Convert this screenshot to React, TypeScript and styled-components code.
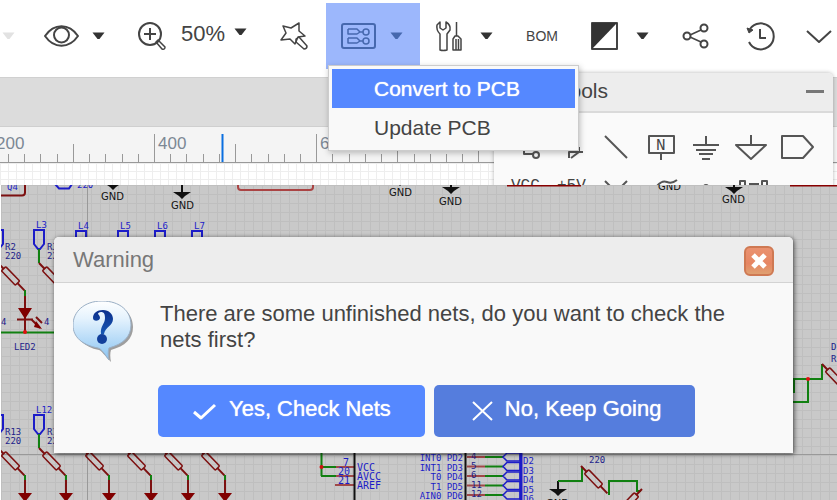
import React from "react";
import styled, { createGlobalStyle } from "styled-components";

const GlobalStyle = createGlobalStyle`
  * { box-sizing: border-box; }
  body { margin: 0; background: #fff; overflow: hidden; }
  body, button { font-family: "Liberation Sans", Arial, sans-serif; }
  button { border: 0; padding: 0; background: none; color: inherit; cursor: pointer; }
  svg { display: block; flex: none; }
`;

const Page = styled.div`
  min-height: 100vh;
  display: flex;
  flex-direction: column;
`;

const Editor = styled.section`
  position: relative;
  height: 185px;
  overflow: hidden;
`;

const Toolbar = styled.header`
  display: flex;
  align-items: center;
  gap: 33px;
  height: 77px;
  padding-bottom: 5px;
  color: #333;
`;

const ToolButton = styled.button<{ $gap?: number; $active?: boolean; $size?: number }>`
  flex: none;
  display: flex;
  align-items: center;
  gap: ${(p) => p.$gap ?? 13}px;
  font-size: ${(p) => p.$size ?? 22}px;
  color: ${(p) => (p.$active ? "#4668ae" : "#444")};
  ${(p) => p.$active && "height: 66px; padding: 0 17px 0 15px; margin: 0 -17px 0 -15px; background: #9cb7fc;"}
`;

const ZoomValue = styled.span`
  padding: 0 0 4px 6px;
`;

const CaretShape = styled.svg<{ $raised?: boolean }>`
  fill: ${(p) => p.color ?? "#333"};
  margin-bottom: ${(p) => (p.$raised ? 8 : 0)}px;
`;

const Glyph = styled.svg<{ $weight?: number }>`
  overflow: visible;
  fill: none;
  stroke: currentColor;
  stroke-width: ${(p) => p.$weight ?? 2};
  stroke-linejoin: round;
`;

const Faint = styled.div`
  width: 11px;
  display: flex;
  padding-left: 2px;
`;

const TabStrip = styled.div`
  height: 50px;
  background: #dcdcdc;
  border-top: 1px solid #d0d0d0;
  border-bottom: 1px solid #cfcfcf;
`;

const Ruler = styled.div`
  height: 36px;
  background: #f4f4f4;
  border-bottom: 1px solid #999;
  overflow: hidden;
  text { font: 17px "Liberation Sans", Arial, sans-serif; fill: #7c8895; }
`;

const Sheet = styled.div`
  height: 22px;
  background-color: #fff;
  background-image: linear-gradient(#eee 1px, transparent 1px), linear-gradient(90deg, #eee 1px, transparent 1px);
  background-size: 8px 8px;
`;

const ToolPanel = styled.aside`
  position: absolute;
  top: 73px;
  left: 494px;
  right: 4px;
  height: 130px;
  background: #fafafa;
  border-radius: 5px;
  box-shadow: 0 0 4px rgba(0, 0, 0, 0.3);
`;

const PanelHeader = styled.div`
  display: flex;
  align-items: center;
  justify-content: space-between;
  height: 40px;
  padding: 0 9px 2px 65px;
  background: #ededed;
  border-bottom: 2px solid #dadada;
  border-radius: 5px 5px 0 0;
  font-size: 21px;
  color: #444;
`;

const MinimizeButton = styled.button`
  width: 18px;
  height: 3px;
  background: #777;
`;

const Palette = styled.div`
  display: grid;
  grid-template-columns: repeat(7, 45px);
  padding: 12px 10px 0 14px;
`;

const PaletteButton = styled.button`
  display: flex;
  width: 45px;
  height: 44px;
  color: #555;
  text { font: 16px "Liberation Mono", monospace; fill: #444; stroke: none; }
`;

const Menu = styled.div`
  position: absolute;
  top: 65px;
  left: 328px;
  display: flex;
  flex-direction: column;
  padding: 3px;
  background: #f9f9f9;
  border: 1px solid #ccc;
  box-shadow: 1px 2px 6px rgba(0, 0, 0, 0.25);
`;

const MenuItem = styled.button<{ $selected?: boolean }>`
  height: 39px;
  padding: 0 55px 0 42px;
  text-align: left;
  white-space: nowrap;
  font-size: 21px;
  color: ${(p) => (p.$selected ? "#fff" : "#444")};
  background: ${(p) => (p.$selected ? "#5588ff" : "transparent")};
  text-shadow: ${(p) => (p.$selected ? "0 0 1px #fff" : "none")};
`;

const Board = styled.main`
  position: relative;
  flex: 1;
  padding: 52px 44px 47px 53px;
  border-left: 1px solid #fff;
  overflow: hidden;
  background-color: #c9c9c9;
  background-image: linear-gradient(#bfbfbf 1px, transparent 1px), linear-gradient(90deg, #bfbfbf 1px, transparent 1px);
  background-size: 9px 9px;
`;

const Schematic = styled.svg`
  position: absolute;
  top: 0;
  left: 0;
  fill: none;
  stroke-width: 2;
  text { stroke: none; font: 9px "DejaVu Sans Mono", monospace; }
  .ground text { font: 10px "DejaVu Sans", sans-serif; }
  .pins text { font-size: 10px; }
`;

const Dialog = styled.div`
  position: relative;
  background: #f9f9f9;
  border-radius: 5px 5px 0 0;
  box-shadow: 1px 1px 5px rgba(0, 0, 0, 0.65);
`;

const DialogHeader = styled.div`
  display: flex;
  align-items: center;
  justify-content: space-between;
  height: 46px;
  padding: 0 19px;
  background: #ededed;
  border-bottom: 1px solid #d3d3d3;
  border-radius: 5px 5px 0 0;
  font-size: 22px;
  color: #777;
`;

const CloseButton = styled.button`
  display: grid;
  place-items: center;
  width: 30px;
  height: 30px;
  margin-top: 2px;
  border: 2px solid #cf7953;
  border-radius: 6px;
  background: linear-gradient(#ea9270, #e68663 60%, #dfa071);
`;

const Message = styled.div`
  display: flex;
  gap: 27px;
  padding: 18px 44px 0 19px;
  p { margin: 0; font-size: 22px; line-height: 26px; color: #444; }
`;

const Actions = styled.div`
  display: flex;
  gap: 9px;
  padding: 22px 0 16px 104px;
`;

const ActionButton = styled.button<{ $muted?: boolean }>`
  display: flex;
  align-items: center;
  gap: 12px;
  height: 52px;
  padding: 0 34px;
  border-radius: 5px;
  background: ${(p) => (p.$muted ? "#557ddd" : "#5588ff")};
  color: #fff;
  font-size: 22px;
  text-shadow: 0 0 1px #fff;
  white-space: nowrap;
  span { padding-bottom: 4px; }
`;

const Caret = ({ color, raised }: { color?: string; raised?: boolean }) => (
  <CaretShape width="13" height="8" viewBox="0 0 13 8" color={color} $raised={raised}>
    <path d="M.5.5h12L7.5 7h-2z" />
  </CaretShape>
);

const RulerMarks = () => (
  <svg width="492" height="36" viewBox="0 127 492 36">
    {Array.from({ length: 31 }, (_, i) => {
      const n = i - 9;
      const x = Math.round(154 + n * 16.22) + 0.5;
      const top = n % 10 === 0 ? 134 : n % 5 === 0 ? 144 : 154;
      return <path key={i} d={`M${x} ${top}V163`} stroke="#999" />;
    })}
    <text x="-4" y="149">200</text>
    <text x="158" y="149">400</text>
    <text x="320" y="149">600</text>
    <path d="M222.5 134V163" stroke="#0a6fe0" strokeWidth="2" />
  </svg>
);

const palette: { name: string; art: React.ReactNode }[] = [
  { name: "Wire", art: <><path d="M16 20v9h9" /><circle cx="28" cy="30" r="3" /></> },
  { name: "Bus", art: <path d="M16 33v-6h14M18 33l8-6v-5" /> },
  { name: "Line", art: <path d="M7 11l22 22" /> },
  { name: "Net label", art: <><path d="M6 11h25v17H6zM18 28v7" /><text x="13" y="25">N</text></> },
  { name: "Ground", art: <path d="M18 11v9M5 20h26M8 25h20M11 29h14M14 34h8" /> },
  { name: "Signal ground", art: <path d="M18 10v10M3 20h30L18 34z" /> },
  { name: "Net port", art: <path d="M4 11h21l10 11-10 11H4z" /> },
  { name: "VCC", art: <text x="3" y="21">VCC</text> },
  { name: "Plus 5 V", art: <text x="4" y="21">+5V</text> },
  { name: "No connect", art: <path d="M7 12l22 22M29 12L7 34" /> },
  { name: "Probe", art: <path d="M14 17q5-6 10-4t10-2" /> },
  { name: "Pin", art: <circle cx="18" cy="18" r="2" /> },
  { name: "Group", art: <path d="M7 12h5v5H7zM29 12h5v5h-5zM16 15h10" /> },
];

const RED = "#7d1010";
const GREEN = "#118011";
const BLUE = "#1c1cc8";
const NAVY = "#22228a";

const grounds = [
  { x: 113, y: 183, textX: 101, textY: 200 },
  { x: 182, y: 192, textX: 171, textY: 209 },
  { x: 400, y: 179, textX: 389, textY: 196 },
  { x: 451, y: 187, textX: 439, textY: 205 },
  { x: 734, y: 187, textX: 722, textY: 203 },
  { x: 670, y: 170, textX: 658, textY: 190 },
  { x: 558, y: 489, textX: 546, textY: 507 },
];

const Resistor = ({ x, y, flip }: { x: number; y: number; flip?: boolean }) => (
  <g transform={`translate(${x} ${y}) rotate(${flip ? 134 : 46})`} stroke={RED}>
    <path d="M0 0h8M28 0h10" />
    <rect x="8" y="-3" width="20" height="6" rx="1" strokeWidth="1.5" />
  </g>
);

const Port = ({ x, y, label }: { x: number; y: number; label: string }) => (
  <g>
    <path d={`M${x - 5} ${y}h10v14l-4 5h-2l-4-5z`} stroke={BLUE} />
    <text x={x - 3} y={y - 2} fill={BLUE}>{label}</text>
  </g>
);

const BoardArt = () => (
  <Schematic width="836" height="315" viewBox="1 185 836 315">
    <path d="M87.5 185V500M1 454.5H837" stroke="#999" strokeWidth="1" />

    <path d="M1 195.500H22q3 0 3-3V185" stroke={RED} />
    <text x="7" y="190" fill={BLUE}>Q4</text>
    <path d="M55 184l4 4.500h10l3-4.500" stroke={BLUE} />
    <text x="77" y="188" fill={BLUE}>220</text>
    <path d="M238 185v2q0 3 3 3h69q3 0 3-3v-2" stroke="#a44" />
    <path d="M507 185.500h74M790 185.500h47" stroke="#800" />

    {grounds.map((g) => (
      <g key={g.x} className="ground" fill="#111">
        <path d={`M${g.x} ${g.y - 8}v8`} stroke="#111" />
        <path d={`M${g.x - 9} ${g.y}h18l-6 4-3 3-3-3z`} />
        <text x={g.textX} y={g.textY}>GND</text>
      </g>
    ))}

    <Port x={-2} y={230} label="2" />
    <Port x={39} y={230} label="L3" />
    <Port x={81} y={231} label="L4" />
    <Port x={123} y={231} label="L5" />
    <Port x={160} y={231} label="L6" />
    <Port x={197} y={231} label="L7" />
    <Port x={-2} y={415} label="1" />
    <Port x={39} y={415} label="L12" />

    <g fill={NAVY}>
      <text x="5" y="250">R2</text>
      <text x="5" y="259">220</text>
      <text x="47" y="250">R3</text>
      <text x="47" y="259">220</text>
      <text x="14" y="350">LED2</text>
      <text x="5" y="435">R13</text>
      <text x="5" y="444">220</text>
      <text x="47" y="435">R14</text>
      <text x="47" y="444">220</text>
      <text x="589" y="463">220</text>
      <text x="831" y="350">D</text>
      <text x="831" y="362">R</text>
    </g>

    <path d="M39 249v14M25 290v6M1 332.500H54M39 434v14" stroke={GREEN} />
    <Resistor x={-2} y={263} />
    <Resistor x={39} y={263} />
    <path d="M25 296v36M17 319.500h16M31 319l9 9M36 317l6 6" stroke={RED} />
    <path d="M18 308h14l-7 11zM36 321l6 8-8-2z" fill="#800000" />
    <text x="1" y="325" fill={NAVY}>4</text>
    <text x="44" y="325" fill={NAVY}>4</text>
    <circle cx="25" cy="332" r="2" fill="#e01010" />

    {[-2, 39, 82, 124, 161, 198].map((x) => (
      <g key={x}>
        <Resistor x={x} y={448} />
        <path d={`M${x + 27} 475v5`} stroke={GREEN} />
        <path d={`M${x + 27} 480v14`} stroke={RED} />
        <path d={`M${x + 20} 493h14l-7 9z`} fill="#800000" />
      </g>
    ))}

    <path d="M321.500 453v23M321 467h16M321 476h16" stroke={GREEN} />
    <path d="M336 467h18M336 476h18M335 485h19" stroke="#a04848" />
    <circle cx="321.500" cy="467" r="2" fill="#d01010" />
    <path d="M354.500 453v47M465.500 453v47" stroke="#111" />
    <g fill={BLUE} className="pins">
      <text x="343" y="466">7</text>
      <text x="338" y="475">20</text>
      <text x="338" y="484">21</text>
      <text x="357" y="471">VCC</text>
      <text x="357" y="480">AVCC</text>
      <text x="357" y="489">AREF</text>
    </g>
    {["INT0 PD2", "INT1 PD3", "T0 PD4", "T1 PD5", "AIN0 PD6"].map((label, i) => {
      const y = 457 + i * 9.5;
      return (
        <g key={label}>
          <text x="463" y={y + 4} fill={BLUE} textAnchor="end">{label}</text>
          <path d={`M467 ${y}h18`} stroke="#a04848" />
          <path d={`M485 ${y}h18`} stroke={GREEN} />
          <path d={`M520 ${y - 4}h-13l-4 4 4 4h13z`} stroke={BLUE} strokeWidth="1.500" />
          <text x="471" y={y + 2} fill={NAVY}>{["4", "5", "6", "11", "12"][i]}</text>
          <text x="523" y={y + 7} fill={BLUE}>{`D${i + 2}`}</text>
        </g>
      );
    })}
    <path d="M521 453v47" stroke={BLUE} strokeWidth="3" />

    <path d="M558 481h24v-14M609 495v-14h28v10h4M794 393v-14h28v-15M808 379v23h-15" stroke={GREEN} />
    <Resistor x={581} y={466} />
    <Resistor x={642} y={489} flip />
    <Resistor x={822} y={364} />
    <circle cx="808" cy="379" r="2" fill="#e01010" />
  </Schematic>
);

const QuestionBubble = () => (
  <svg width="60" height="62" viewBox="0 0 60 62" role="img" aria-label="Question">
    <defs>
      <linearGradient id="bubble" x1="0" y1="0" x2="0" y2="1">
        <stop offset="0" stopColor="#ffffff" />
        <stop offset=".3" stopColor="#e4f2fd" />
        <stop offset="1" stopColor="#8ac4f2" />
      </linearGradient>
      <linearGradient id="mark" x1="0" y1="0" x2="0" y2="1">
        <stop offset="0" stopColor="#0c2f8c" />
        <stop offset="1" stopColor="#1657b4" />
      </linearGradient>
    </defs>
    <path d="M31 3C13 3 3 13 3 26c0 12 8 20 23 23 3 1 6 6 12 12-1-5-1-9 0-12 14-4 22-11 22-23C60 12 49 3 31 3z" fill="#777" opacity=".7" />
    <path d="M29 0C11 0 0 11 0 24c0 12 9 20 25 23 4 1 7 7 11 12-1-4-1-9 0-12 14-4 22-11 22-23C58 10 47 0 29 0z" fill="url(#bubble)" stroke="#9aafc5" />
    <path d="M20 17c0-5 4-8 10-8 6 0 10 4 10 9 0 7-8 8-9 15h-3c-1-8 4-10 4-16 0-4-1-6-4-6-2 0-3 1-3 2 1 1 2 2 2 4 0 3-7 4-7 0z" fill="url(#mark)" />
    <circle cx="29" cy="38" r="5" fill="#123f9b" />
  </svg>
);

export default function App() {
  return (
    <Page>
      <GlobalStyle />
      <Editor>
        <Toolbar>
          <Faint><Caret color="#e2e2e2" /></Faint>
          <ToolButton aria-label="View">
            <Glyph width="35" height="22" viewBox="0 0 35 22">
              <path d="M1 11C10-2 25-2 34 11 25 24 10 24 1 11z" />
              <circle cx="17.500" cy="10" r="7.500" />
            </Glyph>
            <Caret />
          </ToolButton>
          <ToolButton aria-label="Zoom" $gap={9}>
            <Glyph width="28" height="28" viewBox="0 0 28 28">
              <circle cx="12" cy="12" r="11" />
              <path d="M6 12h12M12 6v12" />
              <path d="M18 20l2-2 7 7q0 3-3 2z" strokeWidth="1.5" />
            </Glyph>
            <ZoomValue>50%</ZoomValue>
            <Caret raised />
          </ToolButton>
          <ToolButton aria-label="Wizard">
            <Glyph width="28" height="28" viewBox="0 0 28 28">
              <g strokeWidth="1.5">
                <path d="M3 4l8 2 8-5v8l6 5-7 1-3 7-5-5-9 1 5-7z" />
                <path d="M16 17l3-2 8 9q0 3-3 3l-8-7z" />
              </g>
            </Glyph>
          </ToolButton>
          <ToolButton aria-label="Convert" aria-haspopup="menu" $active $gap={14}>
            <Glyph width="35" height="26" viewBox="0 0 35 26">
              <rect x="1" y="1" width="33" height="24" rx="2" />
              <g strokeWidth="1.5">
                <path d="M7 6h9l3 3h3M7 6v5h9l3-2M7 15h9l3 3h3M7 15v5h9l3-2" />
                <circle cx="25" cy="9" r="3" /><circle cx="25" cy="18" r="3" />
              </g>
            </Glyph>
            <Caret color="#4668ae" />
          </ToolButton>
          <ToolButton aria-label="Tools" $gap={18}>
            <Glyph width="26" height="30" viewBox="0 0 26 30">
              <g strokeWidth="1.5">
                <path d="M4 29V13Q0 9 1 4l3-3v6l3 2 3-2V1q5 3 4 8l-3 4v16q-4 1-7 0z" />
                <path d="M20.5 1v14M17 29V18l2-3h3l3 3v11zM20 18v11M22.5 18v11" />
              </g>
            </Glyph>
            <Caret />
          </ToolButton>
          <ToolButton $size={14}>BOM</ToolButton>
          <ToolButton aria-label="Theme" $gap={18}>
            <Glyph width="27" height="28" viewBox="0 0 27 28">
              <path d="M1 1h25v26H1z" /><path d="M1 1h25L1 27z" fill="#333" stroke="none" />
            </Glyph>
            <Caret />
          </ToolButton>
          <ToolButton aria-label="Share">
            <Glyph width="28" height="26" viewBox="0 0 28 26">
              <circle cx="5" cy="13" r="3.500" /><circle cx="22" cy="5" r="3.500" /><circle cx="22" cy="21" r="3.500" />
              <path d="M8 12l11-5M8 14l11 5" strokeWidth="1.5" />
            </Glyph>
          </ToolButton>
          <ToolButton aria-label="History">
            <Glyph width="30" height="28" viewBox="0 0 30 28">
              <path d="M7 7a13 13 0 1 1-1 13" /><path d="M17 7v9h6" />
              <path d="M4 6l6 2-4 3z" fill="currentColor" strokeWidth="1" />
            </Glyph>
          </ToolButton>
          <ToolButton aria-label="More">
            <Glyph width="26" height="14" viewBox="0 0 26 14"><path d="M1 2l12 11L25 2" /></Glyph>
          </ToolButton>
        </Toolbar>
        <TabStrip />
        <Ruler><RulerMarks /></Ruler>
        <Sheet />
        <ToolPanel>
          <PanelHeader>Tools<MinimizeButton aria-label="Minimize" /></PanelHeader>
          <Palette>
            {palette.map((item) => (
              <PaletteButton key={item.name} aria-label={item.name}>
                <Glyph width="45" height="44" viewBox="0 0 45 44">{item.art}</Glyph>
              </PaletteButton>
            ))}
          </Palette>
        </ToolPanel>
        <Menu>
          <MenuItem $selected>Convert to PCB</MenuItem>
          <MenuItem>Update PCB</MenuItem>
        </Menu>
      </Editor>
      <Board>
        <BoardArt />
        <Dialog role="dialog" aria-label="Warning">
          <DialogHeader>
            Warning
            <CloseButton aria-label="Close">
              <svg width="16" height="16" viewBox="0 0 16 16" stroke="#fff" strokeWidth="5"><path d="M2 2l12 12M14 2L2 14" /></svg>
            </CloseButton>
          </DialogHeader>
          <Message>
            <QuestionBubble />
            <p>There are some unfinished nets, do you want to check the nets first?</p>
          </Message>
          <Actions>
            <ActionButton>
              <Glyph width="25" height="18" viewBox="0 0 25 18" $weight={3}><path d="M2 10l7 6L23 3" /></Glyph>
              <span>Yes, Check Nets</span>
            </ActionButton>
            <ActionButton $muted>
              <Glyph width="25" height="20" viewBox="0 0 25 20"><path d="M5 1l19 18M24 1L5 19" /></Glyph>
              <span>No, Keep Going</span>
            </ActionButton>
          </Actions>
        </Dialog>
      </Board>
    </Page>
  );
}
